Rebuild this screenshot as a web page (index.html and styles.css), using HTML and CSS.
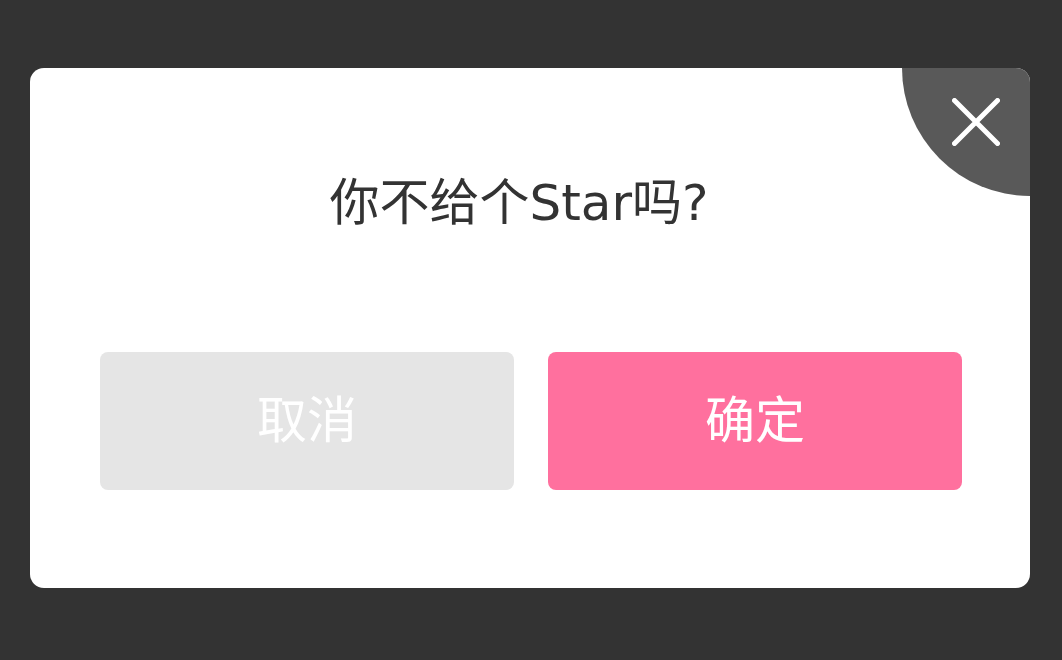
FILE: index.html
```html
<!DOCTYPE html>
<html lang="zh">
<head>
<meta charset="utf-8">
<link rel="stylesheet" href="styles.css">
</head>
<body>
<div class="dialog">
  <div class="close">
    <svg class="close-icon" width="48" height="48" viewBox="0 0 48 48">
      <path d="M2.5 2.5 L45.5 45.5 M45.5 2.5 L2.5 45.5" stroke="#fff" stroke-width="5" stroke-linecap="round" fill="none"/>
    </svg>
  </div>
  <div class="title">你不给个Star吗?</div>
  <div class="actions">
    <button class="btn btn-cancel">取消</button>
    <button class="btn btn-ok">确定</button>
  </div>
</div>
</body>
</html>
```
FILE: styles.css
```css
html, body {
  margin: 0;
  padding: 0;
  background: #333333;
  width: 1062px;
  height: 660px;
  overflow: hidden;
}
body {
  padding: 68px 0 0 30px;
  box-sizing: border-box;
  font-family: "Noto Sans CJK SC", "Noto Sans", sans-serif;
}
.dialog {
  position: relative;
  width: 1000px;
  height: 520px;
  background: #fff;
  border-radius: 14px;
  overflow: hidden;
  box-sizing: border-box;
  padding: 103px 68px 98px 70px;
  display: flex;
  flex-direction: column;
}
.close {
  position: absolute;
  top: 0;
  right: 0;
  width: 128px;
  height: 128px;
  background: #595959;
  border-bottom-left-radius: 128px;
}
.close-icon {
  position: absolute;
  left: 50px;
  top: 30px;
}
.title {
  text-align: center;
  font-family: "DejaVu Sans", "Noto Sans CJK SC", sans-serif;
  font-size: 50px;
  line-height: 64px;
  color: #333;
  font-weight: 400;
  padding-right: 24px;
}
.actions {
  margin-top: 117px;
  display: flex;
  gap: 34px;
}
.btn {
  width: 414px;
  height: 138px;
  border: none;
  border-radius: 8px;
  color: #fff;
  font-family: "Noto Sans CJK SC", "Noto Sans", sans-serif;
  font-size: 50px;
  font-weight: 400;
  padding: 0 0 10px;
}
.btn-cancel {
  background: #e5e5e5;
}
.btn-ok {
  background: #ff709e;
}
```
